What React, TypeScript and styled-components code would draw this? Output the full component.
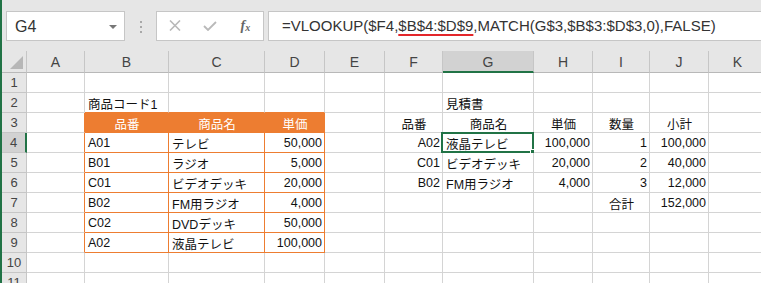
import React from "react";
import styled, { createGlobalStyle } from "styled-components";

const GREEN = "#217346";
const ORANGE = "#ED7D31";
const GRID = "#d4d4d4";
const HEAD_LINE = "#c6c6c6";

const COLS = ["A", "B", "C", "D", "E", "F", "G", "H", "I", "J", "K"];
const WIDTHS = [58, 84, 96, 60, 60, 58, 91, 59, 57, 59, 58];
const ROW_COUNT = 11;

type Align = "left" | "right" | "center";
type CellData = { v: string; align?: Align };

const cells: Record<string, CellData> = {
  B2: { v: "商品コード1" },
  B3: { v: "品番", align: "center" },
  C3: { v: "商品名", align: "center" },
  D3: { v: "単価", align: "center" },
  B4: { v: "A01" },
  C4: { v: "テレビ" },
  D4: { v: "50,000", align: "right" },
  B5: { v: "B01" },
  C5: { v: "ラジオ" },
  D5: { v: "5,000", align: "right" },
  B6: { v: "C01" },
  C6: { v: "ビデオデッキ" },
  D6: { v: "20,000", align: "right" },
  B7: { v: "B02" },
  C7: { v: "FM用ラジオ" },
  D7: { v: "4,000", align: "right" },
  B8: { v: "C02" },
  C8: { v: "DVDデッキ" },
  D8: { v: "50,000", align: "right" },
  B9: { v: "A02" },
  C9: { v: "液晶テレビ" },
  D9: { v: "100,000", align: "right" },
  G2: { v: "見積書" },
  F3: { v: "品番", align: "center" },
  G3: { v: "商品名", align: "center" },
  H3: { v: "単価", align: "center" },
  I3: { v: "数量", align: "center" },
  J3: { v: "小計", align: "center" },
  F4: { v: "A02", align: "right" },
  G4: { v: "液晶テレビ" },
  H4: { v: "100,000", align: "right" },
  I4: { v: "1", align: "right" },
  J4: { v: "100,000", align: "right" },
  F5: { v: "C01", align: "right" },
  G5: { v: "ビデオデッキ" },
  H5: { v: "20,000", align: "right" },
  I5: { v: "2", align: "right" },
  J5: { v: "40,000", align: "right" },
  F6: { v: "B02", align: "right" },
  G6: { v: "FM用ラジオ" },
  H6: { v: "4,000", align: "right" },
  I6: { v: "3", align: "right" },
  J6: { v: "12,000", align: "right" },
  I7: { v: "合計", align: "center" },
  J7: { v: "152,000", align: "right" },
};

// orange table B3:D9, header row 3
const inTable = (c: number, r: number) => c >= 1 && c <= 3 && r >= 3 && r <= 9;
const isHead = (c: number, r: number) => inTable(c, r) && r === 3;

const GlobalStyle = createGlobalStyle`
  body {
    margin: 0;
    background: #fff;
    font-family: "Liberation Sans", "Noto Sans CJK JP", sans-serif;
  }
`;

const Window = styled.div`
  display: flex;
  flex-direction: column;
  width: 761px;
  height: 283px;
  overflow: hidden;
  box-sizing: border-box;
  border-left: 2px solid ${GREEN};
  background: #fff;
`;

const FormulaBar = styled.div`
  display: flex;
  align-items: center;
  height: 51px;
  flex-shrink: 0;
  padding-left: 4px;
  background: #e6e6e6;
`;

const NameBox = styled.div`
  display: flex;
  align-items: center;
  justify-content: space-between;
  width: 119px;
  height: 30px;
  box-sizing: border-box;
  padding: 2px 7px 0 8px;
  background: #fff;
  border: 1px solid ${HEAD_LINE};
  font-size: 16px;
  color: #333;
`;

const DropArrow = styled.span`
  width: 0;
  height: 0;
  border-left: 4px solid transparent;
  border-right: 4px solid transparent;
  border-top: 4px solid #777;
`;

const Grip = styled.div`
  display: flex;
  flex-direction: column;
  gap: 3px;
  margin-left: 15px;
  margin-top: 2px;
`;

const GripDot = styled.span`
  width: 2px;
  height: 2px;
  background: #a8a8a8;
`;

const FuncBox = styled.div`
  display: flex;
  align-items: center;
  width: 108px;
  height: 30px;
  margin-left: 14px;
  box-sizing: border-box;
  background: #fff;
  border: 1px solid ${HEAD_LINE};
`;

const IconSlot = styled.span`
  display: flex;
  align-items: center;
  justify-content: center;
  width: 36px;
  height: 100%;
`;

const Fx = styled.span`
  font-family: "Liberation Serif", serif;
  font-style: italic;
  font-weight: bold;
  font-size: 14px;
  color: #666;

  sub {
    font-size: 10px;
    vertical-align: -1px;
  }
`;

const FormulaInput = styled.div`
  flex: 1;
  display: flex;
  align-items: center;
  height: 30px;
  margin-left: 4px;
  margin-right: -2px;
  padding-left: 13px;
  box-sizing: border-box;
  background: #fff;
  border: 1px solid ${HEAD_LINE};
  font-size: 15px;
  color: #333;
  white-space: nowrap;
`;

const RangeRef = styled.span`
  text-decoration: underline;
  text-decoration-color: #e3262a;
  text-decoration-thickness: 1.5px;
  text-underline-offset: 3px;
`;

const Sheet = styled.div`
  display: grid;
  grid-template-columns: 25px ${WIDTHS.map((w) => `${w}px`).join(" ")};
  grid-template-rows: 22px repeat(${ROW_COUNT}, 20px);
`;

const Corner = styled.div`
  position: relative;
  box-sizing: border-box;
  background: #e6e6e6;
  border-right: 1px solid ${HEAD_LINE};
  border-bottom: 1px solid #b8b8b8;

  &::after {
    content: "";
    position: absolute;
    right: 3px;
    bottom: 3px;
    width: 0;
    height: 0;
    border-left: 13px solid transparent;
    border-bottom: 13px solid #b7b7b7;
  }
`;

const ColHead = styled.div<{ $active?: boolean }>`
  display: flex;
  align-items: center;
  justify-content: center;
  box-sizing: border-box;
  padding-top: 1px;
  background: ${({ $active }) => ($active ? "#d2d2d2" : "#e6e6e6")};
  border-right: 1px solid ${HEAD_LINE};
  border-bottom: ${({ $active }) => ($active ? `2px solid ${GREEN}` : "1px solid #b8b8b8")};
  font-size: 14px;
  color: #444;
`;

const RowHead = styled.div<{ $active?: boolean }>`
  display: flex;
  align-items: center;
  justify-content: center;
  box-sizing: border-box;
  background: ${({ $active }) => ($active ? "#d2d2d2" : "#e6e6e6")};
  border-right: ${({ $active }) => ($active ? `2px solid ${GREEN}` : `1px solid ${HEAD_LINE}`)};
  border-bottom: 1px solid ${HEAD_LINE};
  font-size: 13px;
  color: #444;
`;

const Cell = styled.div<{ $align: Align; $fill?: boolean; $bottom: string; $right: string }>`
  position: relative;
  display: flex;
  align-items: center;
  justify-content: ${({ $align }) =>
    $align === "right" ? "flex-end" : $align === "center" ? "center" : "flex-start"};
  box-sizing: border-box;
  padding: 1px 2px 0 3px;
  background: ${({ $fill }) => ($fill ? ORANGE : "#fff")};
  border-right: 1px solid ${({ $right }) => $right};
  border-bottom: 1px solid ${({ $bottom }) => $bottom};
  font-size: 12.5px;
  color: ${({ $fill }) => ($fill ? "#fff" : "#111")};
  white-space: nowrap;
`;

const Selection = styled.div`
  position: absolute;
  top: -1px;
  left: -2px;
  right: -1px;
  bottom: -1px;
  border: 2px solid ${GREEN};
  pointer-events: none;
`;

const FillHandle = styled.span`
  position: absolute;
  right: -5px;
  bottom: -5px;
  width: 7px;
  height: 7px;
  box-sizing: border-box;
  background: ${GREEN};
  border: 1px solid #fff;
`;

const CrossIcon = () => (
  <svg width="12" height="11" viewBox="0 0 12 11">
    <path d="M1 0.5 L11 10.5 M11 0.5 L1 10.5" stroke="#b9b9b9" strokeWidth="1.6" fill="none" />
  </svg>
);

const CheckIcon = () => (
  <svg width="14" height="10" viewBox="0 0 14 10">
    <path d="M1 5 L5 9 L13 1" stroke="#b9b9b9" strokeWidth="1.8" fill="none" />
  </svg>
);

const SelectedCol = 6; // G
const SelectedRow = 4;

const App = () => {
  const rows = Array.from({ length: ROW_COUNT }, (_, i) => i + 1);

  return (
    <>
      <GlobalStyle />
      <Window>
        <FormulaBar>
          <NameBox>
            <span>G4</span>
            <DropArrow />
          </NameBox>
          <Grip>
            <GripDot />
            <GripDot />
            <GripDot />
          </Grip>
          <FuncBox>
            <IconSlot>
              <CrossIcon />
            </IconSlot>
            <IconSlot>
              <CheckIcon />
            </IconSlot>
            <IconSlot>
              <Fx>
                f<sub>x</sub>
              </Fx>
            </IconSlot>
          </FuncBox>
          <FormulaInput>
            =VLOOKUP($F4,<RangeRef>$B$4:$D$9</RangeRef>,MATCH(G$3,$B$3:$D$3,0),FALSE)
          </FormulaInput>
        </FormulaBar>

        <Sheet>
          <Corner />
          {COLS.map((c, ci) => (
            <ColHead key={c} $active={ci === SelectedCol}>
              {c}
            </ColHead>
          ))}
          {rows.map((r) => (
            <React.Fragment key={r}>
              <RowHead $active={r === SelectedRow}>{r}</RowHead>
              {COLS.map((c, ci) => {
                const data = cells[`${c}${r}`];
                const bottom = inTable(ci, r) || inTable(ci, r + 1) ? ORANGE : GRID;
                const right =
                  (inTable(ci, r) && (ci === 3 || isHead(ci, r))) || inTable(ci + 1, r)
                    ? ORANGE
                    : GRID;
                const selected = ci === SelectedCol && r === SelectedRow;
                return (
                  <Cell
                    key={c}
                    $align={data?.align ?? "left"}
                    $fill={isHead(ci, r)}
                    $bottom={bottom}
                    $right={right}
                  >
                    {data?.v}
                    {selected && (
                      <Selection>
                        <FillHandle />
                      </Selection>
                    )}
                  </Cell>
                );
              })}
            </React.Fragment>
          ))}
        </Sheet>
      </Window>
    </>
  );
};

export default App;
